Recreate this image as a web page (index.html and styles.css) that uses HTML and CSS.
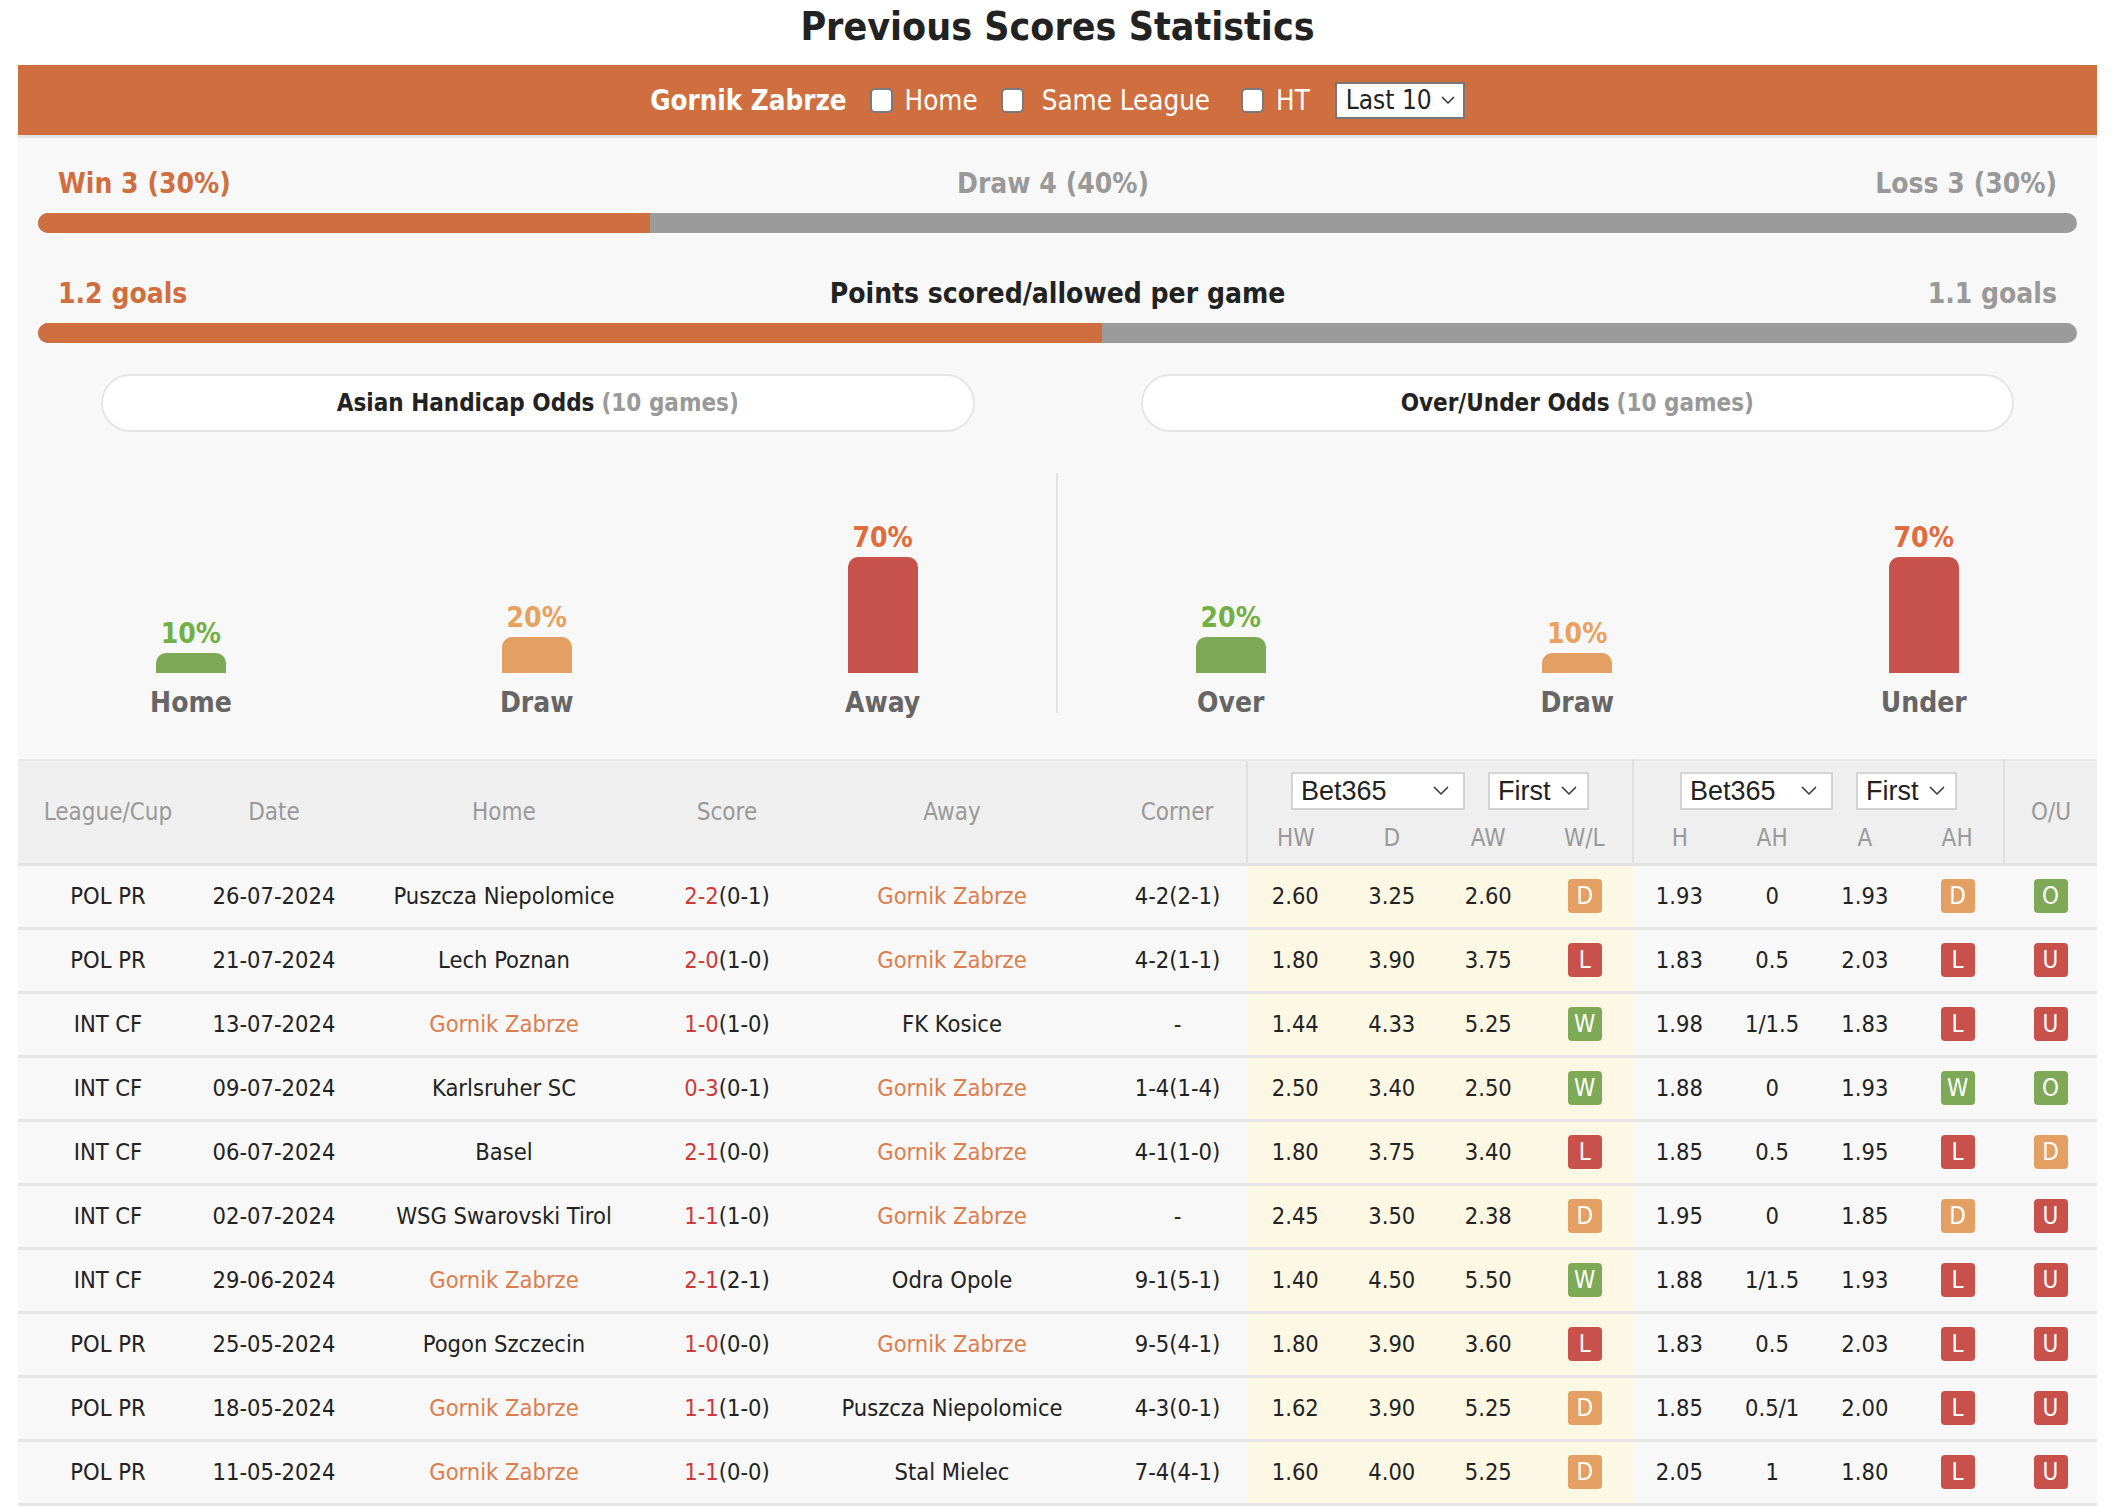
FILE: index.html
```html
<!DOCTYPE html>
<html lang="en">
<head>
<meta charset="utf-8">
<title>Previous Scores Statistics</title>
<link rel="stylesheet" href="styles.css">
</head>
<body>
<div class="wrap">
  <h1 class="title">Previous Scores Statistics</h1>
  <div class="filter">
    <span class="team">Gornik Zabrze</span>
    <input type="checkbox" class="cb cb-home"><span class="lbl">Home</span>
    <input type="checkbox" class="cb cb-league"><span class="lbl">Same League</span>
    <input type="checkbox" class="cb cb-ht"><span class="lbl">HT</span>
    <div class="sel sel-last"><span>Last 10</span><svg width="14" height="9" viewBox="0 0 14 9"><path d="M1 1l6 6 6-6" fill="none" stroke="#333" stroke-width="1.5"/></svg></div>
  </div>
  <div class="panel">
    <div class="summary">
      <div class="stat-row">
        <span class="c-win">Win 3 (30%)</span>
        <span class="c-grey">Draw 4 (40%)</span>
        <span class="c-grey">Loss 3 (30%)</span>
      </div>
      <div class="pbar"><div class="pfill" style="width:30%"></div></div>
      <div class="stat-row row-goals">
        <span class="c-win">1.2 goals</span>
        <span class="c-dark">Points scored/allowed per game</span>
        <span class="c-grey">1.1 goals</span>
      </div>
      <div class="pbar"><div class="pfill" style="width:52.17%"></div></div>
    </div>
    <div class="odds">
      <div class="half">
        <div class="pill"><b>Asian Handicap Odds</b> <span class="games">(10 games)</span></div>
        <div class="chart chart-left">
          <div class="col"><div class="pct t-green">10%</div><div class="cbar b-green" style="height:20px"></div><div class="clab">Home</div></div>
          <div class="col"><div class="pct t-orange">20%</div><div class="cbar b-orange" style="height:36px"></div><div class="clab">Draw</div></div>
          <div class="col"><div class="pct t-red">70%</div><div class="cbar b-red" style="height:116px"></div><div class="clab">Away</div></div>
        </div>
      </div>
      <div class="half">
        <div class="pill"><b>Over/Under Odds</b> <span class="games">(10 games)</span></div>
        <div class="chart">
          <div class="col"><div class="pct t-green">20%</div><div class="cbar b-green" style="height:36px"></div><div class="clab">Over</div></div>
          <div class="col"><div class="pct t-orange">10%</div><div class="cbar b-orange" style="height:20px"></div><div class="clab">Draw</div></div>
          <div class="col"><div class="pct t-red">70%</div><div class="cbar b-red" style="height:116px"></div><div class="clab">Under</div></div>
        </div>
      </div>
    </div>
    <table class="games-table">
      <colgroup>
        <col style="width:180px"><col style="width:152px"><col style="width:308px"><col style="width:138px"><col style="width:312px"><col style="width:139px">
        <col style="width:96.5px"><col style="width:96.5px"><col style="width:96.5px"><col style="width:96.5px">
        <col style="width:92.75px"><col style="width:92.75px"><col style="width:92.75px"><col style="width:92.75px">
        <col style="width:93px">
      </colgroup>
      <thead>
        <tr class="h1">
          <th rowspan="2">League/Cup</th>
          <th rowspan="2">Date</th>
          <th rowspan="2">Home</th>
          <th rowspan="2">Score</th>
          <th rowspan="2">Away</th>
          <th rowspan="2">Corner</th>
          <th colspan="4" class="grp">
            <div class="selrow">
              <div class="sel sel-book1"><span>Bet365</span><svg width="16" height="10" viewBox="0 0 16 10"><path d="M1 1l7 7 7-7" fill="none" stroke="#333" stroke-width="1.5"/></svg></div>
              <div class="sel sel-first"><span>First</span><svg width="16" height="10" viewBox="0 0 16 10"><path d="M1 1l7 7 7-7" fill="none" stroke="#333" stroke-width="1.5"/></svg></div>
            </div>
          </th>
          <th colspan="4" class="grp">
            <div class="selrow">
              <div class="sel sel-book2"><span>Bet365</span><svg width="16" height="10" viewBox="0 0 16 10"><path d="M1 1l7 7 7-7" fill="none" stroke="#333" stroke-width="1.5"/></svg></div>
              <div class="sel sel-first"><span>First</span><svg width="16" height="10" viewBox="0 0 16 10"><path d="M1 1l7 7 7-7" fill="none" stroke="#333" stroke-width="1.5"/></svg></div>
            </div>
          </th>
          <th rowspan="2">O/U</th>
        </tr>
        <tr class="h2">
          <th class="gl">HW</th><th>D</th><th>AW</th><th class="gr">W/L</th>
          <th class="gl">H</th><th>AH</th><th>A</th><th class="gr">AH</th>
        </tr>
      </thead>
      <tbody>
        <tr><td>POL PR</td><td>26-07-2024</td><td>Puszcza Niepolomice</td><td><span class="sc">2-2</span>(0-1)</td><td class="hl">Gornik Zabrze</td><td>4-2(2-1)</td><td class="y">2.60</td><td class="y">3.25</td><td class="y">2.60</td><td class="y"><span class="bd bd-d">D</span></td><td>1.93</td><td>0</td><td>1.93</td><td><span class="bd bd-d">D</span></td><td><span class="bd bd-w">O</span></td></tr>
        <tr><td>POL PR</td><td>21-07-2024</td><td>Lech Poznan</td><td><span class="sc">2-0</span>(1-0)</td><td class="hl">Gornik Zabrze</td><td>4-2(1-1)</td><td class="y">1.80</td><td class="y">3.90</td><td class="y">3.75</td><td class="y"><span class="bd bd-l">L</span></td><td>1.83</td><td>0.5</td><td>2.03</td><td><span class="bd bd-l">L</span></td><td><span class="bd bd-l">U</span></td></tr>
        <tr><td>INT CF</td><td>13-07-2024</td><td class="hl">Gornik Zabrze</td><td><span class="sc">1-0</span>(1-0)</td><td>FK Kosice</td><td>-</td><td class="y">1.44</td><td class="y">4.33</td><td class="y">5.25</td><td class="y"><span class="bd bd-w">W</span></td><td>1.98</td><td>1/1.5</td><td>1.83</td><td><span class="bd bd-l">L</span></td><td><span class="bd bd-l">U</span></td></tr>
        <tr><td>INT CF</td><td>09-07-2024</td><td>Karlsruher SC</td><td><span class="sc">0-3</span>(0-1)</td><td class="hl">Gornik Zabrze</td><td>1-4(1-4)</td><td class="y">2.50</td><td class="y">3.40</td><td class="y">2.50</td><td class="y"><span class="bd bd-w">W</span></td><td>1.88</td><td>0</td><td>1.93</td><td><span class="bd bd-w">W</span></td><td><span class="bd bd-w">O</span></td></tr>
        <tr><td>INT CF</td><td>06-07-2024</td><td>Basel</td><td><span class="sc">2-1</span>(0-0)</td><td class="hl">Gornik Zabrze</td><td>4-1(1-0)</td><td class="y">1.80</td><td class="y">3.75</td><td class="y">3.40</td><td class="y"><span class="bd bd-l">L</span></td><td>1.85</td><td>0.5</td><td>1.95</td><td><span class="bd bd-l">L</span></td><td><span class="bd bd-d">D</span></td></tr>
        <tr><td>INT CF</td><td>02-07-2024</td><td>WSG Swarovski Tirol</td><td><span class="sc">1-1</span>(1-0)</td><td class="hl">Gornik Zabrze</td><td>-</td><td class="y">2.45</td><td class="y">3.50</td><td class="y">2.38</td><td class="y"><span class="bd bd-d">D</span></td><td>1.95</td><td>0</td><td>1.85</td><td><span class="bd bd-d">D</span></td><td><span class="bd bd-l">U</span></td></tr>
        <tr><td>INT CF</td><td>29-06-2024</td><td class="hl">Gornik Zabrze</td><td><span class="sc">2-1</span>(2-1)</td><td>Odra Opole</td><td>9-1(5-1)</td><td class="y">1.40</td><td class="y">4.50</td><td class="y">5.50</td><td class="y"><span class="bd bd-w">W</span></td><td>1.88</td><td>1/1.5</td><td>1.93</td><td><span class="bd bd-l">L</span></td><td><span class="bd bd-l">U</span></td></tr>
        <tr><td>POL PR</td><td>25-05-2024</td><td>Pogon Szczecin</td><td><span class="sc">1-0</span>(0-0)</td><td class="hl">Gornik Zabrze</td><td>9-5(4-1)</td><td class="y">1.80</td><td class="y">3.90</td><td class="y">3.60</td><td class="y"><span class="bd bd-l">L</span></td><td>1.83</td><td>0.5</td><td>2.03</td><td><span class="bd bd-l">L</span></td><td><span class="bd bd-l">U</span></td></tr>
        <tr><td>POL PR</td><td>18-05-2024</td><td class="hl">Gornik Zabrze</td><td><span class="sc">1-1</span>(1-0)</td><td>Puszcza Niepolomice</td><td>4-3(0-1)</td><td class="y">1.62</td><td class="y">3.90</td><td class="y">5.25</td><td class="y"><span class="bd bd-d">D</span></td><td>1.85</td><td>0.5/1</td><td>2.00</td><td><span class="bd bd-l">L</span></td><td><span class="bd bd-l">U</span></td></tr>
        <tr><td>POL PR</td><td>11-05-2024</td><td class="hl">Gornik Zabrze</td><td><span class="sc">1-1</span>(0-0)</td><td>Stal Mielec</td><td>7-4(4-1)</td><td class="y">1.60</td><td class="y">4.00</td><td class="y">5.25</td><td class="y"><span class="bd bd-d">D</span></td><td>2.05</td><td>1</td><td>1.80</td><td><span class="bd bd-l">L</span></td><td><span class="bd bd-l">U</span></td></tr>
      </tbody>
    </table>
  </div>
</div>
</body>
</html>
```
FILE: styles.css
```css
* { box-sizing: border-box; }
body {
  margin: 0;
  background: #fff;
  color: #222;
  font-family: "DejaVu Sans Condensed", "DejaVu Sans", sans-serif;
  font-stretch: condensed;
}
.wrap { margin: 0 21px 0 18px; }
.title {
  margin: 0 0 11px;
  height: 54px;
  line-height: 54px;
  text-align: center;
  font-size: 39px;
  font-weight: bold;
  color: #222;
}
.filter {
  height: 73px;
  background: #cf6f3f;
  border-bottom: 3px solid #e3e3e3;
  display: flex;
  align-items: center;
  justify-content: center;
  color: #fff;
  font-size: 27.5px;
}
.team { font-weight: bold; margin-right: 23px; }
.cb {
  appearance: none;
  -webkit-appearance: none;
  margin: 0;
  width: 23px;
  height: 25px;
  background: #fff;
  border: 2px solid #7a7a7a;
  border-radius: 5px;
  margin-right: 12px;
}
.cb-league { margin-right: 18px; }
.cb-home ~ .lbl { margin-right: 23px; }
.lbl:nth-of-type(3) { margin-right: 31px; }
.lbl:last-of-type { margin-right: 25px; }
.sel {
  display: flex;
  align-items: center;
  justify-content: space-between;
  background: #fff;
  color: #222;
}
.sel-last {
  width: 130px;
  height: 37px;
  border: 2px solid #777;
  padding: 0 8px 0 9px;
  font-size: 26px;
}
.panel { background: #f8f8f8; }
.summary { padding: 29px 20px 0; }
.stat-row {
  display: flex;
  justify-content: space-between;
  padding: 0 20px;
  height: 34px;
  line-height: 34px;
  font-size: 28px;
  font-weight: bold;
}
.row-goals { margin-top: 44px; }
.c-win { color: #cf6e3e; }
.c-grey { color: #999; }
.c-dark { color: #222; }
.pbar {
  margin-top: 12px;
  height: 20px;
  border-radius: 10px;
  background: #9b9b9b;
  overflow: hidden;
}
.pfill { height: 100%; background: #cf6f3f; }
.odds { display: flex; margin-top: 31px; }
.half { flex: 1; }
.pill {
  margin: 0 83px;
  height: 58px;
  border: 2px solid #e6e6e6;
  border-radius: 29px;
  background: #fff;
  display: flex;
  align-items: center;
  justify-content: center;
  gap: 7px;
  font-size: 24px;
  color: #222;
}
.pill .games { color: #999; font-weight: bold; }
.chart {
  margin-top: 41px;
  height: 240px;
  display: flex;
}
.chart-left { border-right: 2px solid #e2e2e2; }
.col {
  flex: 1;
  display: flex;
  flex-direction: column;
  justify-content: flex-end;
  align-items: center;
}
.pct {
  font-size: 28px;
  font-weight: bold;
  line-height: 28px;
  margin-bottom: 5px;
}
.cbar { width: 70px; border-radius: 10px 10px 0 0; }
.clab {
  margin-top: 20px;
  line-height: 20px;
  font-size: 28px;
  font-weight: bold;
  color: #666;
}
.t-green { color: #72b043; }
.t-orange { color: #e8a15e; }
.t-red { color: #e06b3d; }
.b-green { background: #7ea957; }
.b-orange { background: #e4a062; }
.b-red { background: #c7514b; }

.games-table {
  margin-top: 46px;
  width: 100%;
  border-collapse: collapse;
  table-layout: fixed;
  font-size: 23.5px;
}
.games-table thead { background: #efefef; }
.games-table th {
  font-weight: normal;
  color: #999;
  text-align: center;
  padding: 0;
  font-size: 24px;
}
.h1 th { height: 54px; border-top: 2px solid #e8e8e8; }
.h2 th { height: 50px; border-bottom: 3px solid #e3e3e3; line-height: 28px; vertical-align: top; padding-top: 10px; }
.h1 th[rowspan] { border-bottom: 3px solid #e3e3e3; }
.h1 th.grp { border-left: 2px solid #e0e0e0; border-right: 2px solid #e0e0e0; vertical-align: bottom; padding-bottom: 4px; }
.h1 th:last-child { border-left: 2px solid #e0e0e0; }
.h2 th.gl { border-left: 2px solid #e0e0e0; }
.h2 th.gr { border-right: 2px solid #e0e0e0; }
.selrow { display: flex; justify-content: center; gap: 23px; }
.sel-book1, .sel-book2, .sel-first {
  height: 38px;
  border: 2px solid #d3d3d3;
  font-family: "Liberation Sans", Arial, sans-serif;
  font-size: 27px;
  padding: 0 14px 0 8px;
}
.sel-book1 { width: 174px; }
.sel-book2 { width: 153px; }
.sel-first { width: 101px; padding-right: 10px; }
.games-table td {
  height: 64px;
  text-align: center;
  border-bottom: 3px solid #e6e6e6;
  padding: 0;
  color: #222;
  white-space: nowrap;
}
.games-table td.y { background: #fdf8e4; }
.games-table td.hl { color: #dc7d4e; }
.sc { color: #cc3a3a; }
.bd {
  display: inline-block;
  width: 34px;
  height: 34px;
  line-height: 34px;
  border-radius: 4px;
  color: #fff;
  vertical-align: middle;
  font-size: 24px;
}
.bd-d { background: #e4a062; }
.bd-l { background: #c8514b; }
.bd-w { background: #7ea957; }
```
